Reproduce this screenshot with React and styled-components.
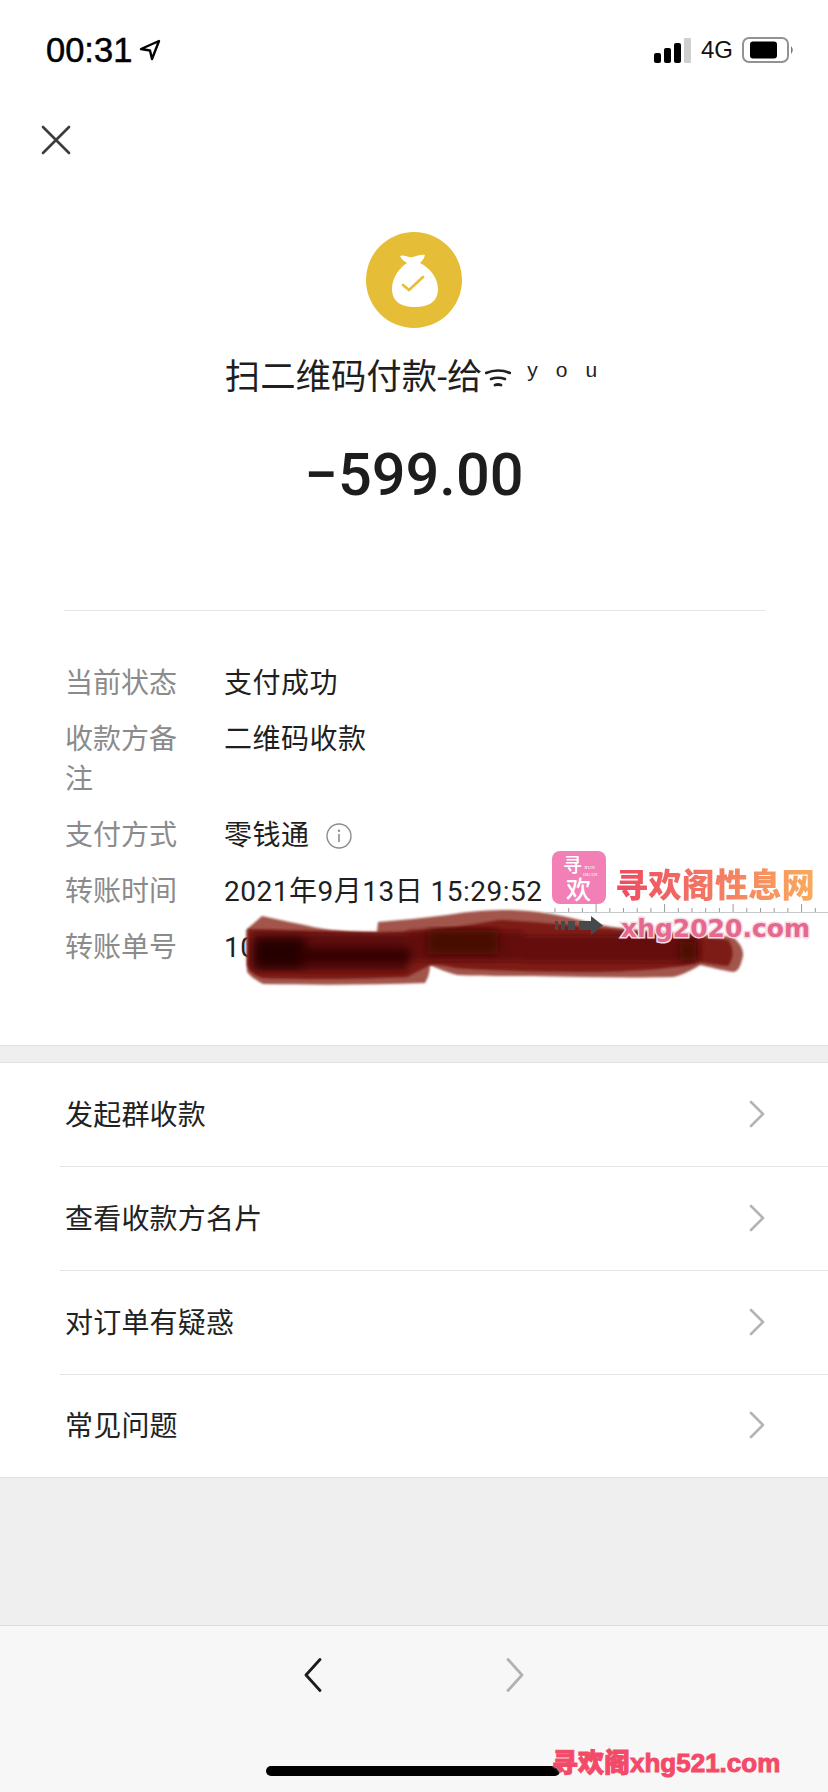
import React from "react";
import styled, { createGlobalStyle } from "styled-components";

const cjk = `"Noto Sans CJK SC", sans-serif`;
const latin = `"Roboto", "Noto Sans CJK SC", sans-serif`;

const GlobalStyle = createGlobalStyle`
  html, body {
    margin: 0;
    padding: 0;
    background: #fff;
  }
  * {
    box-sizing: border-box;
  }
`;

const Page = styled.div`
  position: relative;
  display: flex;
  flex-direction: column;
  width: 828px;
  height: 1792px;
  overflow: hidden;
  background: #fff;
  font-family: ${latin};
  color: #1f1f1f;
`;

const StatusBar = styled.header`
  display: flex;
  align-items: center;
  justify-content: space-between;
  height: 100px;
  padding: 0 33px 0 46px;
`;

const StatusGroup = styled.div`
  display: flex;
  align-items: center;
  gap: ${({ $gap }) => $gap}px;
`;

const Clock = styled.span`
  font-family: "Liberation Sans", sans-serif;
  font-size: 34.5px;
  line-height: 40px;
  color: #000;
  -webkit-text-stroke: 0.5px #000;
`;

const Network = styled.span`
  font-family: "Liberation Sans", sans-serif;
  font-size: 24px;
  line-height: 30px;
  color: #111;
`;

const CloseButton = styled.button`
  align-self: flex-start;
  display: block;
  width: 30px;
  height: 30px;
  margin: 25px 0 0 41px;
  padding: 0;
  border: 0;
  background: none;
  color: #3c3c3c;
`;

const Badge = styled.div`
  display: flex;
  align-self: center;
  width: 96px;
  height: 96px;
  margin-top: 77px;
  border-radius: 50%;
  background: #e5bd36;
`;

const Title = styled.h1`
  display: flex;
  align-items: center;
  justify-content: center;
  height: 44px;
  margin: 23px 0 0;
  font-size: 35.4px;
  font-weight: 400;
  color: #1f1f1f;
`;

const NickName = styled.span`
  margin: -6px -12px 0 16px;
  font-family: "Liberation Sans", sans-serif;
  font-size: 21px;
  letter-spacing: 18px;
`;

const WifiSvg = styled.svg`
  margin: 10px 0 0 3px;
`;

const Amount = styled.div`
  height: 70px;
  margin-top: 45px;
  font-size: 59.5px;
  font-weight: 500;
  line-height: 70px;
  text-align: center;
  color: #1d1d1d;
`;

const Divider = styled.hr`
  width: 701px;
  height: 1px;
  margin: 100px 0 0 64px;
  border: 0;
  background: #e4e4e4;
`;

const Details = styled.dl`
  position: relative;
  display: grid;
  grid-template-columns: 115px 1fr;
  column-gap: 44px;
  row-gap: 16px;
  margin: 0;
  padding: 53px 0 77px 65px;
  font-size: 28px;
  line-height: 40px;
`;

const Label = styled.dt`
  color: #8b8b8b;
`;

const Value = styled.dd`
  display: flex;
  align-items: flex-start;
  margin: 0;
  letter-spacing: 0.5px;
  color: #1f1f1f;
`;

const InfoMark = styled.span`
  display: flex;
  align-self: center;
  margin-left: 16px;
  color: #8d8d8d;
`;

const Scribble = styled.svg`
  position: absolute;
  left: 0;
  top: 0;
  pointer-events: none;
`;

const SiteMark = styled.div`
  position: absolute;
  left: 545px;
  top: 240px;
  width: 283px;
`;

const SiteLogo = styled.svg`
  display: block;
  margin-left: 7px;
`;

const SiteName = styled.span`
  position: absolute;
  left: 70px;
  top: 10px;
  font-family: ${cjk};
  font-size: 33.3px;
  font-weight: 900;
  line-height: 44px;
  white-space: nowrap;
  background: linear-gradient(90deg, #ee4a62 0%, #f47f63 55%, #f9ab5c 100%);
  -webkit-background-clip: text;
  background-clip: text;
  color: transparent;
`;

const SiteRuler = styled.svg`
  display: block;
`;

const SiteUrl = styled.span`
  position: absolute;
  left: 76px;
  top: 63px;
  font-family: "DejaVu Sans", sans-serif;
  font-size: 25px;
  font-weight: 700;
  line-height: 30px;
  color: #e5688e;
  -webkit-text-stroke: 3px #f7dbe2;
  paint-order: stroke fill;
`;

const SiteArrow = styled.svg`
  position: absolute;
  left: 10px;
  top: 65px;
`;

const SectionGap = styled.div`
  height: 18px;
  border-top: 1px solid #e2e2e2;
  border-bottom: 1px solid #e2e2e2;
  background: #efefef;
`;

const Menu = styled.ul`
  margin: 0;
  padding: 0;
  list-style: none;
  border-bottom: 1px solid #e2e2e2;
`;

const MenuItem = styled.li`
  display: flex;
  align-items: center;
  justify-content: space-between;
  height: ${({ $last }) => ($last ? 102 : 104)}px;
  margin-left: 60px;
  padding: 0 62px 2px 5px;
  font-size: 28px;
  letter-spacing: 0.2px;
  color: #222;
  border-bottom: ${({ $last }) => ($last ? "0" : "1px solid #e4e4e4")};
`;

const MenuText = styled.span`
  margin-bottom: 2px;
`;

const Filler = styled.div`
  flex: 1;
  background: #efefef;
`;

const Toolbar = styled.footer`
  display: flex;
  flex-direction: column;
  align-items: center;
  height: 167px;
  padding-top: 32px;
  border-top: 1px solid #dcdcdc;
  background: #f7f7f7;
`;

const ToolbarNav = styled.div`
  display: flex;
  gap: 184px;
`;

const NavSvg = styled.svg`
  transform: ${({ $flip }) => ($flip ? "scaleX(-1)" : "none")};
`;

const HomeBar = styled.div`
  width: 294px;
  height: 10px;
  margin-top: 74px;
  margin-right: 2px;
  border-radius: 5px;
  background: #000;
`;

const FooterStamp = styled.div`
  position: absolute;
  left: 552px;
  top: 1746px;
  font-family: "Liberation Sans", ${cjk};
  font-size: 26px;
  font-weight: 900;
  line-height: 34px;
  white-space: nowrap;
  color: #f34a69;
  -webkit-text-stroke: 1px #f34a69;
  text-shadow: 0 0 2px #fff, 0 0 2px #fff, 0 0 3px #fff;
`;

const SignalIcon = () => (
  <svg width="38" height="25" viewBox="0 0 38 25">
    <rect x="0" y="15" width="7" height="10" rx="2" fill="#000" />
    <rect x="10" y="10" width="7" height="15" rx="2" fill="#000" />
    <rect x="20" y="5" width="7" height="20" rx="2" fill="#000" />
    <rect x="30" y="0" width="7" height="25" rx="1" fill="#cfcfcf" />
  </svg>
);

const LocationIcon = () => (
  <svg width="22" height="22" viewBox="0 0 22 22">
    <path d="M20 2 L2 10 L11 11.5 L13 20 Z" fill="none" stroke="#000" strokeWidth="2.4" strokeLinejoin="round" />
  </svg>
);

const BatteryIcon = () => (
  <svg width="53" height="26" viewBox="0 0 53 26">
    <rect x="1" y="1" width="45" height="24" rx="6" fill="#fff" stroke="#929292" strokeWidth="2" />
    <rect x="8" y="4.5" width="27" height="17" rx="3" fill="#000" />
    <path d="M49 9 Q52.5 13 49 17 Z" fill="#777" />
  </svg>
);

const CloseIcon = () => (
  <svg width="30" height="30" viewBox="0 0 30 30">
    <path d="M2 2 L28 28 M28 2 L2 28" stroke="currentColor" strokeWidth="2.6" strokeLinecap="round" />
  </svg>
);

const MoneyBagIcon = () => (
  <svg width="96" height="96" viewBox="0 0 96 96">
    <path
      d="M34 24 C38 22 42 26 47 25 C51 24 55 22 59 23 C58 27 56 29 54 31 C64 36 72 46 72 57 C72 70 62 75 49 75 C36 75 26 70 26 57 C26 46 33 36 41 31 C38 29 35 27 34 24 Z"
      fill="#fff"
    />
    <path d="M37 53 L43 58 L57 45" fill="none" stroke="#e5bd36" strokeWidth="2.6" strokeLinecap="round" />
  </svg>
);

const WifiGlyph = () => (
  <WifiSvg width="26" height="20" viewBox="0 0 26 20">
    <path d="M1 5 Q13 0 25 5" fill="none" stroke="#1f1f1f" strokeWidth="2.6" strokeLinecap="round" />
    <path d="M6 11 Q13 8.5 20 11" fill="none" stroke="#1f1f1f" strokeWidth="2.6" strokeLinecap="round" />
    <path d="M10 17 Q13 16 16 17" fill="none" stroke="#1f1f1f" strokeWidth="2.8" strokeLinecap="round" />
  </WifiSvg>
);

const InfoIcon = () => (
  <svg width="26" height="26" viewBox="0 0 26 26">
    <circle cx="13" cy="13" r="12" fill="none" stroke="currentColor" strokeWidth="1.4" />
    <circle cx="13" cy="7.8" r="1.2" fill="currentColor" />
    <path d="M13 11 V19" stroke="currentColor" strokeWidth="1.6" />
  </svg>
);

const ChevronRight = ({ color = "#b4b4b4" }) => (
  <svg width="18" height="28" viewBox="0 0 18 28">
    <path d="M3 2 L15 14 L3 26" fill="none" stroke={color} strokeWidth="2.6" strokeLinecap="round" strokeLinejoin="round" />
  </svg>
);

const NavChevron = ({ color, flip }) => (
  <NavSvg width="18" height="34" viewBox="0 0 18 34" $flip={flip}>
    <path d="M16 1.5 L2 17 L16 32.5" fill="none" stroke={color} strokeWidth="2.8" strokeLinecap="round" strokeLinejoin="round" />
  </NavSvg>
);

// ink strokes laid over the order number, coordinates follow the page
const InkScribble = () => (
  <Scribble width="828" height="436" viewBox="0 611 828 436">
    <defs>
      <filter id="ink-soft"><feGaussianBlur stdDeviation="1.3" /></filter>
      <filter id="ink-mid"><feGaussianBlur stdDeviation="2.5" /></filter>
      <filter id="ink-blur"><feGaussianBlur stdDeviation="5" /></filter>
    </defs>
    <path
      filter="url(#ink-soft)"
      fill="#a2544c"
      d="M262 916 C280 920 300 924 313 927 C340 932 360 932 377 932 L378 922 C400 920 425 918 447 915 C470 911 490 910 510 910 C540 911 560 915 580 920 C600 926 620 928 650 931 C690 934 715 935 733 937 C742 945 745 952 742 960 C740 968 737 972 733 972 C720 970 710 967 700 965 C690 971 682 975 673 977 C630 978 580 977 533 976 C500 976 475 976 457 975 C445 972 437 968 430 965 C430 972 428 978 425 983 C370 985 310 985 263 984 C255 980 250 976 247 972 L246 930 Z"
    />
    <path
      filter="url(#ink-soft)"
      fill="#7d1f18"
      d="M248 929 C290 930 340 932 380 933 C420 932 460 927 500 920 C540 922 580 926 620 930 C660 934 700 937 728 940 C734 948 734 958 728 966 C715 965 708 963 700 962 C680 968 640 971 600 972 C550 972 500 971 455 968 C440 964 432 964 428 966 L407 977 C360 979 310 980 262 978 C254 975 249 970 247 965 Z"
    />
    <g filter="url(#ink-mid)">
      <rect x="252" y="934" width="155" height="38" rx="4" fill="#5e0c07" />
      <rect x="405" y="931" width="120" height="30" rx="6" fill="#640f09" />
      <rect x="520" y="936" width="180" height="26" rx="6" fill="#650e08" />
    </g>
    <g filter="url(#ink-blur)">
      <rect x="254" y="938" width="52" height="30" rx="6" fill="#260101" />
      <rect x="300" y="948" width="110" height="16" fill="#360403" />
      <rect x="428" y="930" width="70" height="24" fill="#470705" />
      <rect x="680" y="942" width="16" height="18" fill="#4a0805" />
    </g>
  </Scribble>
);

const SiteBadge = () => (
  <SiteLogo width="54" height="53" viewBox="0 0 54 53">
    <rect width="54" height="53" rx="8" fill="#f27fb6" />
    <text x="11" y="21" fontSize="19" fontWeight="500" fill="#fff" fontFamily={cjk}>寻</text>
    <text x="14" y="48" fontSize="25" fontWeight="500" fill="#fff" fontFamily={cjk}>欢</text>
    <text x="32" y="18" fontSize="5" fill="#fff" fontFamily="Liberation Serif, serif">XUN</text>
    <text x="31" y="25" fontSize="5" fill="#fff" fontFamily="Liberation Serif, serif">DUAN</text>
  </SiteLogo>
);

const RulerLine = () => (
  <SiteRuler width="283" height="10" viewBox="0 0 283 10">
    <path d="M0 8.5 H283" stroke="#c4c8c8" strokeWidth="1" />
    {Array.from({ length: 21 }, (_, i) => (
      <path key={i} d={`M${10 + i * 13.7} ${i % 5 === 3 ? 0 : 4} V8`} stroke="#9a9a9a" strokeWidth="1" />
    ))}
  </SiteRuler>
);

const ArrowMark = () => (
  <SiteArrow width="50" height="20" viewBox="0 0 50 20">
    <path d="M0 5 h3 v9 h-3 Z M6 5 h4 v9 h-4 Z M13 5 h7 v9 h-7 Z M24 5 h12 V0 L48 9.5 L36 19 v-5 H24 Z" fill="#474a4c" />
  </SiteArrow>
);

const details = [
  { label: "当前状态", value: "支付成功" },
  { label: "收款方备注", value: "二维码收款" },
  { label: "支付方式", value: "零钱通", info: true },
  { label: "转账时间", value: "2021年9月13日 15:29:52" },
  { label: "转账单号", value: "10" },
];

const menu = ["发起群收款", "查看收款方名片", "对订单有疑惑", "常见问题"];

export default function App() {
  return (
    <Page>
      <GlobalStyle />
      <StatusBar>
        <StatusGroup $gap={7}>
          <Clock>00:31</Clock>
          <LocationIcon />
        </StatusGroup>
        <StatusGroup $gap={9}>
          <SignalIcon />
          <Network>4G</Network>
          <BatteryIcon />
        </StatusGroup>
      </StatusBar>

      <CloseButton aria-label="close">
        <CloseIcon />
      </CloseButton>

      <Badge>
        <MoneyBagIcon />
      </Badge>
      <Title>
        扫二维码付款-给
        <WifiGlyph />
        <NickName>you</NickName>
      </Title>
      <Amount>−599.00</Amount>

      <Divider />
      <Details>
        {details.map((row) => (
          <React.Fragment key={row.label}>
            <Label>{row.label}</Label>
            <Value>
              {row.value}
              {row.info && (
                <InfoMark>
                  <InfoIcon />
                </InfoMark>
              )}
            </Value>
          </React.Fragment>
        ))}
        <InkScribble />
        <SiteMark>
          <SiteBadge />
          <RulerLine />
          <SiteName>寻欢阁性息网</SiteName>
          <ArrowMark />
          <SiteUrl>xhg2020.com</SiteUrl>
        </SiteMark>
      </Details>

      <SectionGap />
      <Menu>
        {menu.map((item, i) => (
          <MenuItem key={item} $last={i === menu.length - 1}>
            <MenuText>{item}</MenuText>
            <ChevronRight />
          </MenuItem>
        ))}
      </Menu>
      <Filler />

      <Toolbar>
        <ToolbarNav>
          <NavChevron color="#1c1c1c" />
          <NavChevron color="#b2b2b2" flip />
        </ToolbarNav>
        <HomeBar />
      </Toolbar>
      <FooterStamp>寻欢阁xhg521.com</FooterStamp>
    </Page>
  );
}
